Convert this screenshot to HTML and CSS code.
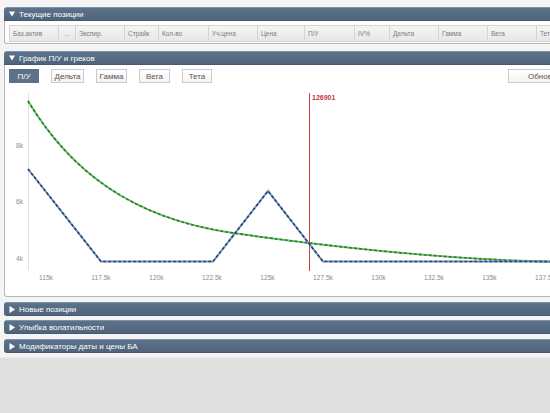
FILE: index.html
```html
<!DOCTYPE html>
<html lang="ru">
<head>
<meta charset="utf-8">
<title>Опционы</title>
<link rel="stylesheet" href="styles.css">
</head>
<body>
<div class="page">
  <section class="panel open">
    <div class="phead"><svg class="tri" width="6" height="6" viewBox="0 0 6 6"><polygon points="0,0.5 6,0.5 3,5.5" fill="#fff"/></svg><span>Текущие позиции</span></div>
    <div class="pbody table-body">
      <div class="thead">
        <div class="th">Баз.актив</div>
        <div class="th center">...</div>
        <div class="th">Экспир.</div>
        <div class="th">Страйк</div>
        <div class="th">Кол-во</div>
        <div class="th">Уч.цена</div>
        <div class="th">Цена</div>
        <div class="th">П/У</div>
        <div class="th">IV%</div>
        <div class="th">Дельта</div>
        <div class="th">Гамма</div>
        <div class="th">Вега</div>
        <div class="th">Тета</div>
      </div>
    </div>
  </section>

  <section class="panel open chart-panel">
    <div class="phead"><svg class="tri" width="6" height="6" viewBox="0 0 6 6"><polygon points="0,0.5 6,0.5 3,5.5" fill="#fff"/></svg><span>График П/У и греков</span></div>
    <div class="pbody chart-body">
      <div class="toolbar">
        <div class="tabs">
          <div class="tab active w30">П/У</div>
          <div class="tab w33">Дельта</div>
          <div class="tab w31">Гамма</div>
          <div class="tab w31">Вега</div>
          <div class="tab w30">Тета</div>
        </div>
        <div class="tab refresh">Обновить</div>
      </div>
      <svg class="chart" width="558" height="213" viewBox="5 83 558 213">
        <line x1="28.5" y1="93" x2="28.5" y2="270" stroke="#e2e2e2" stroke-width="1"/>
        <g class="ylab">
          <text x="23" y="147.5">8k</text>
          <text x="23" y="203.5">6k</text>
          <text x="23" y="260.5">4k</text>
        </g>
        <g class="xlab">
          <text x="46" y="280">115k</text>
          <text x="101" y="280">117.5k</text>
          <text x="156.5" y="280">120k</text>
          <text x="212" y="280">122.5k</text>
          <text x="267.5" y="280">125k</text>
          <text x="323" y="280">127.5k</text>
          <text x="378.5" y="280">130k</text>
          <text x="434" y="280">132.5k</text>
          <text x="489.5" y="280">135k</text>
          <text x="545" y="280">137.5k</text>
        </g>
        <rect x="309" y="93" width="1" height="178" fill="#d23c3c"/>
        <text class="mark" x="312" y="100">126901</text>
        <path d="M28,101 C70,170 130,218 233,233 C290,241 430,260 563,262" fill="none" stroke="#6cc46c" stroke-width="2"/>
        <path d="M28,101 C70,170 130,218 233,233 C290,241 430,260 563,262" fill="none" stroke="#2b7d2b" stroke-width="1.6" stroke-dasharray="3 2"/>
        <path d="M28,169 L101,261.5 L213,261.5 L268,191 L323,261.5 L563,261.5" fill="none" stroke="#7d98c4" stroke-width="2"/>
        <path d="M28,169 L101,261.5 L213,261.5 L268,191 L323,261.5 L563,261.5" fill="none" stroke="#254574" stroke-width="1.6" stroke-dasharray="3 2"/>
      </svg>
    </div>
  </section>

  <section class="panel closed first-closed">
    <div class="phead"><svg class="tri" width="6" height="7" viewBox="0 0 6 7"><polygon points="0.5,0 6,3.5 0.5,7" fill="#fff"/></svg><span>Новые позиции</span></div>
  </section>
  <section class="panel closed">
    <div class="phead"><svg class="tri" width="6" height="7" viewBox="0 0 6 7"><polygon points="0.5,0 6,3.5 0.5,7" fill="#fff"/></svg><span>Улыбка волатильности</span></div>
  </section>
  <section class="panel closed last-closed">
    <div class="phead"><svg class="tri" width="6" height="7" viewBox="0 0 6 7"><polygon points="0.5,0 6,3.5 0.5,7" fill="#fff"/></svg><span>Модификаторы даты и цены БА</span></div>
  </section>
</div>
</body>
</html>
```
FILE: styles.css
```css
html, body {
  margin: 0;
  padding: 0;
}
body {
  background: #e0e0e0;
  overflow: hidden;
  font-family: "Liberation Sans", Arial, sans-serif;
  width: 550px;
  height: 413px;
}
.page {
  background: #f4f4f4;
  padding: 7px 0 4px 4px;
  display: flex;
  flex-direction: column;
  border-bottom: 1px solid #ececec;
}
.panel {
  width: 560px;
  flex: none;
}
.phead {
  box-sizing: border-box;
  height: 14px;
  background: linear-gradient(#5c728b, #4f647c);
  border-top: 1px solid #7d90a5;
  border-bottom: 1px solid #46596f;
  color: #fff;
  font-size: 8px;
  display: flex;
  align-items: center;
  gap: 4px;
  padding-left: 5px;
  border-radius: 3px 0 0 0;
  white-space: nowrap;
}
.closed .phead {
  border-radius: 3px 0 0 3px;
}
.tri {
  display: block;
  flex: none;
}
.pbody {
  background: #fff;
  border: 1px solid #b7b7b7;
  border-top: none;
  border-radius: 0 0 0 3px;
}
.table-body {
  padding: 4px 0 1px 4px;
}
.thead {
  display: grid;
  grid-template-columns: 48px 17px 49px 34px 50px 49px 47px 50px 35px 49px 49px 49px 60px;
  height: 17px;
  box-sizing: border-box;
  border: 1px solid #d6d6d6;
  border-right: none;
  background: linear-gradient(#f5f5f5, #e7e7e7);
}
.th {
  font-size: 6.5px;
  color: #7d7d7d;
  display: flex;
  align-items: center;
  padding-left: 3px;
  border-left: 1px solid #d4d4d4;
  white-space: nowrap;
}
.th:first-child {
  border-left: none;
}
.th.center {
  justify-content: center;
  padding-left: 0;
}
.chart-panel {
  margin-top: 7px;
}
.chart-body {
  padding-top: 4px;
}
.toolbar {
  display: flex;
  justify-content: space-between;
  padding-left: 4px;
}
.tabs {
  display: flex;
  gap: 12px;
}
.tab {
  box-sizing: border-box;
  height: 14px;
  border: 1px solid #cacaca;
  background: linear-gradient(#ffffff, #f3f3f3);
  color: #555;
  font-size: 8px;
  font-weight: normal;
  display: flex;
  align-items: center;
  justify-content: center;
  white-space: nowrap;
}
.tab.active {
  background: #5d7189;
  border-color: #5d7189;
  color: #fff;
}
.w30 { width: 30px; }
.w31 { width: 31px; }
.w33 { width: 33px; }
.refresh {
  width: 55px;
  justify-content: flex-start;
  padding-left: 19px;
  overflow: hidden;
}
.chart {
  display: block;
}
.ylab text {
  font-size: 6.6px;
  fill: #8c8c8c;
  text-anchor: end;
  font-family: "Liberation Sans", Arial, sans-serif;
}
.xlab text {
  font-size: 6.6px;
  fill: #8c8c8c;
  text-anchor: middle;
  font-family: "Liberation Sans", Arial, sans-serif;
}
.mark {
  font-size: 7px;
  font-weight: bold;
  fill: #c23a3a;
  font-family: "Liberation Sans", Arial, sans-serif;
}
.first-closed {
  margin-top: 5px;
}
.closed + .closed {
  margin-top: 4px;
}
.last-closed {
  margin-top: 5px !important;
}
```
